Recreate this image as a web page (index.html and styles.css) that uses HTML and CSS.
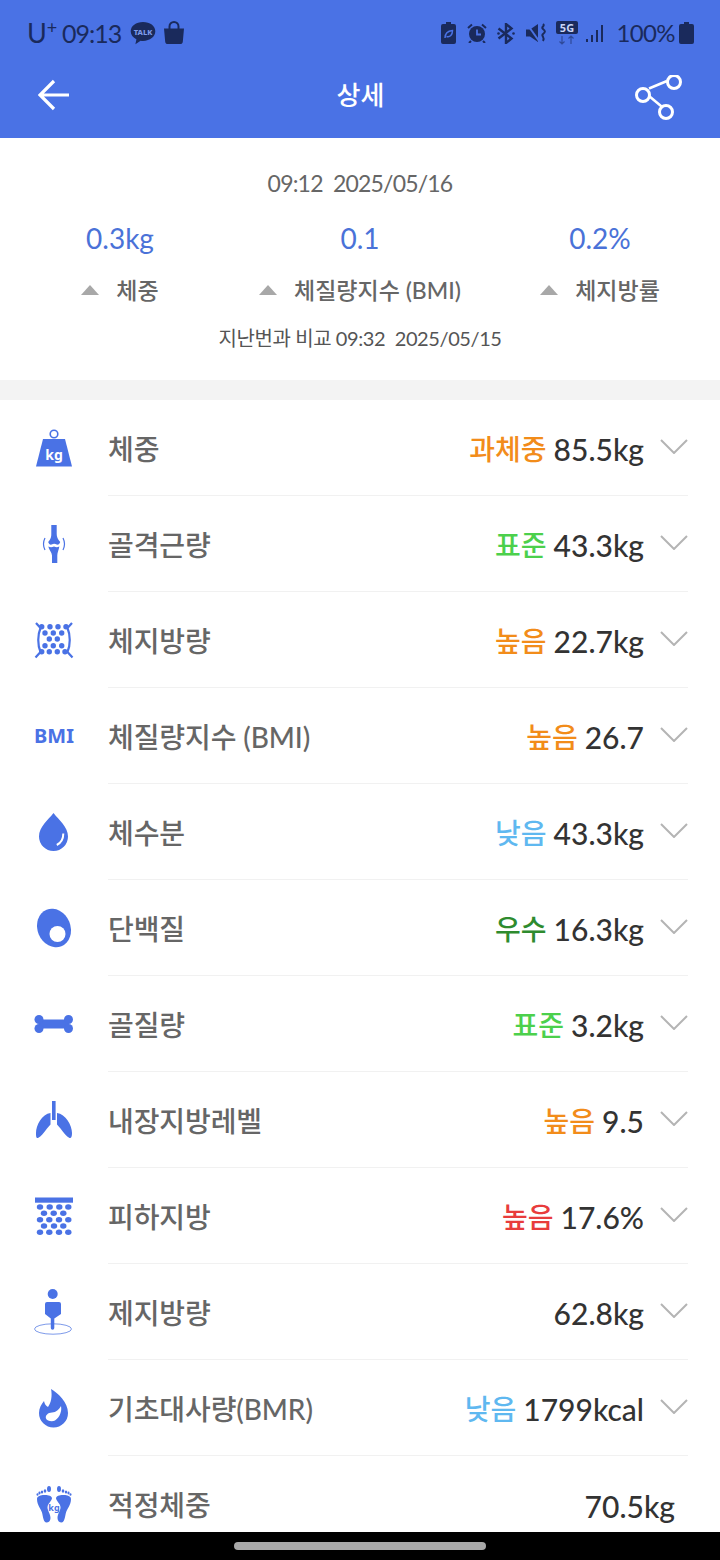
FILE: index.html
```html
<!DOCTYPE html>
<html lang="ko">
<head>
    <meta charset="UTF-8">
    <meta name="viewport" content="width=device-width, initial-scale=1.0">
    <title>상세</title>
    <link rel="stylesheet" href="styles.css">
</head>
<body>
    <div class="screen">
        <header class="top">
            <div class="status-bar">
                <div class="status-left">
                    <span class="carrier">U<sup>+</sup></span>
                    <span class="clock">09:13</span>
                    <svg class="s-talk" viewBox="0 0 26 24"><path d="M13 1C6 1 .7 5 .7 10.300c0 3.400 2.300 6.300 5.700 8l-1 4.900 5.200-3.500c.8.100 1.600.2 2.400.2 7 0 12.300-4.200 12.300-9.600S20 1 13 1z" fill="#1a2a5c"/><text x="13" y="13.500" class="talk-text">TALK</text></svg>
                    <svg class="s-bag" viewBox="0 0 22 24"><path d="M6.500 8V5.500a4.500 4.500 0 0 1 9 0V8" fill="none" stroke="#1a2a5c" stroke-width="2"/><path d="M1 7.500h20l-1.200 13.200c-.1 1.500-1.200 2.300-2.600 2.300H4.800c-1.400 0-2.500-.8-2.600-2.300z" fill="#1a2a5c"/></svg>
                </div>
                <div class="status-right">
                    <svg class="s-i15" viewBox="0 0 15 22"><path d="M5 0h5v2h3a2 2 0 0 1 2 2v16a2 2 0 0 1-2 2H2a2 2 0 0 1-2-2V4a2 2 0 0 1 2-2h3z" fill="#1a2a5c"/><path d="M4 16c0-5 3-7 7.500-7.500C11.500 13 9 15.500 5.500 14.500" fill="none" stroke="#4a72e5" stroke-width="1.500"/></svg>
                    <svg class="s-i20" viewBox="0 0 20 20"><circle cx="10" cy="11" r="8" fill="#1a2a5c"/><path d="M10 6.500V11.500h4" fill="none" stroke="#4a72e5" stroke-width="1.800"/><path d="M1 5l4-3.500M19 5l-4-3.500M4 18l-2 2M16 18l2 2" stroke="#1a2a5c" stroke-width="2"/></svg>
                    <svg class="s-i18" viewBox="0 0 18 21"><path d="M1.500 5.500l13 10-5.500 4.500V1l5.500 4.500-13 10" fill="none" stroke="#1a2a5c" stroke-width="2.400"/><circle cx="1.500" cy="10.500" r="1.300" fill="#1a2a5c"/><circle cx="16.500" cy="10.500" r="1.300" fill="#1a2a5c"/></svg>
                    <svg class="s-i20" viewBox="0 0 20 20"><path d="M0 6.500h4L12 1v18l-8-5.500H0z" fill="#1a2a5c"/><path d="M1 1l12 17" stroke="#4a72e5" stroke-width="2"/><path d="M17 1c2.500 2-2.500 3 0 5s2.500 3 0 5 2.500 3 0 7" fill="none" stroke="#1a2a5c" stroke-width="2"/></svg>
                    <svg class="s-5g" viewBox="0 0 22 24"><rect width="22" height="13" rx="2" fill="#1a2a5c"/><text x="11" y="10.800" class="fiveg-text">5G</text><path d="M6 15v8M3.500 20.500L6 23l2.500-2.500M15 23v-8M12.500 17.500L15 15l2.500 2.500" fill="none" stroke="#1a2a5c" stroke-opacity=".55" stroke-width="1.200"/></svg>
                    <svg class="s-signal" viewBox="0 0 19 18"><path d="M1 15h2v3H1zM6 11h2v7H6zM11 6h2v12h-2zM16 1h2v17h-2z" fill="#1a2a5c"/></svg>
                    <span class="battery-text">100%</span>
                    <svg class="s-i15" viewBox="0 0 15 22"><path d="M5 0h5v2h3a2 2 0 0 1 2 2v16a2 2 0 0 1-2 2H2a2 2 0 0 1-2-2V4a2 2 0 0 1 2-2h3z" fill="#1a2a5c"/></svg>
                </div>
            </div>
            <div class="app-bar">
                <svg class="back" viewBox="0 0 32 32"><path d="M31 16H2M16 2L2 16l14 14" fill="none" stroke="#fff" stroke-width="3.200"/></svg>
                <h1>상세</h1>
                <svg class="share" viewBox="0 0 48 46"><path d="M14 13.500L32 6M14 21l18 15" fill="none" stroke="#fff" stroke-width="2.500"/><circle cx="39" cy="7" r="6.500" fill="#4a72e5" stroke="#fff" stroke-width="3"/><circle cx="8" cy="20" r="6.500" fill="#4a72e5" stroke="#fff" stroke-width="3"/><circle cx="31" cy="37" r="6.500" fill="#4a72e5" stroke="#fff" stroke-width="3"/></svg>
            </div>
        </header>

        <section class="summary">
            <p class="measured">09:12&nbsp; 2025/05/16</p>
            <div class="deltas">
                <div class="delta">
                    <div class="delta-value">0.3kg</div>
                    <div class="delta-label"><i class="up"></i>체중</div>
                </div>
                <div class="delta">
                    <div class="delta-value">0.1</div>
                    <div class="delta-label"><i class="up"></i>체질량지수 (BMI)</div>
                </div>
                <div class="delta">
                    <div class="delta-value">0.2%</div>
                    <div class="delta-label"><i class="up"></i>체지방률</div>
                </div>
            </div>
            <p class="compare">지난번과 비교 09:32&nbsp; 2025/05/15</p>
        </section>

        <main class="list">
            <div class="row">
                <div class="row-icon">
                    <svg viewBox="0 0 40 40"><circle cx="20" cy="6" r="3.800" fill="none" stroke="#4a72e5" stroke-width="1.600"/><path d="M9 11h22l7 27.500H2z" fill="#4a72e5"/><text x="20" y="32" class="icon-kg">kg</text></svg>
                </div>
                <div class="row-body">
                    <span class="row-name">체중</span>
                    <span class="grade orange">과체중</span>
                    <span class="row-value">85.5kg</span>
                    <svg class="chevron" viewBox="0 0 28 15"><path d="M1 1l13 13L27 1" fill="none" stroke="#b4b4b4" stroke-width="2"/></svg>
                </div>
            </div>
            <div class="row">
                <div class="row-icon">
                    <svg viewBox="0 0 40 40"><path d="M17.300 1h5.400v9c0 3 1 5 3.500 8-.5 2-2 3-3.500 2.500-1.500-1-3.500-1-5 0-1.500.5-3-.5-3.500-2.500 2.500-3 3.200-5 3.100-8zM14.300 22.500c2 1 3.500 1 5.700 0 2.200 1 3.500 1 5.300 0-.3 3-2 6-2 9V39H18v-7.500c0-3-3.300-6-3.700-9z" fill="#4a72e5"/><path d="M11 14c-2 4-2 8 0 12M29 14c2 4 2 8 0 12" fill="none" stroke="#4a72e5" stroke-width="1.200"/></svg>
                </div>
                <div class="row-body">
                    <span class="row-name">골격근량</span>
                    <span class="grade green">표준</span>
                    <span class="row-value">43.3kg</span>
                    <svg class="chevron" viewBox="0 0 28 15"><path d="M1 1l13 13L27 1" fill="none" stroke="#b4b4b4" stroke-width="2"/></svg>
                </div>
            </div>
            <div class="row">
                <div class="row-icon">
                    <svg viewBox="0 0 40 40" fill="#4a72e5">
                        <path d="M2 3l4.500 5C3.500 15 3.500 25 6.500 32L1.500 37.500M38 3l-4.500 5c3 7 3 17 0 24l5 5.500" fill="none" stroke="#4a72e5" stroke-width="2.200"/>
                        <circle cx="7.700" cy="6.700" r="2.700"/><circle cx="16" cy="6.700" r="2.700"/><circle cx="24" cy="6.700" r="2.700"/><circle cx="32" cy="6.700" r="2.700"/>
                        <circle cx="11" cy="13" r="2.700"/><circle cx="19.300" cy="13" r="2.700"/><circle cx="27.700" cy="13" r="2.700"/>
                        <circle cx="15.300" cy="19" r="2.700"/><circle cx="23.300" cy="19" r="2.700"/>
                        <circle cx="11" cy="25.700" r="2.700"/><circle cx="19.300" cy="25.700" r="2.700"/><circle cx="27.700" cy="25.700" r="2.700"/>
                        <circle cx="7.700" cy="31.700" r="2.700"/><circle cx="15.300" cy="31.700" r="2.700"/><circle cx="23.300" cy="31.700" r="2.700"/><circle cx="31" cy="31.700" r="2.700"/>
                    </svg>
                </div>
                <div class="row-body">
                    <span class="row-name">체지방량</span>
                    <span class="grade orange">높음</span>
                    <span class="row-value">22.7kg</span>
                    <svg class="chevron" viewBox="0 0 28 15"><path d="M1 1l13 13L27 1" fill="none" stroke="#b4b4b4" stroke-width="2"/></svg>
                </div>
            </div>
            <div class="row">
                <div class="row-icon"><span class="bmi-mark">BMI</span></div>
                <div class="row-body">
                    <span class="row-name">체질량지수 (BMI)</span>
                    <span class="grade orange">높음</span>
                    <span class="row-value">26.7</span>
                    <svg class="chevron" viewBox="0 0 28 15"><path d="M1 1l13 13L27 1" fill="none" stroke="#b4b4b4" stroke-width="2"/></svg>
                </div>
            </div>
            <div class="row">
                <div class="row-icon">
                    <svg viewBox="0 0 40 40"><path d="M19.500 1C14 8 5 15 5 24.500a14.500 14.500 0 0 0 29 0C34 15 25 8 19.500 1z" fill="#4a72e5"/><path d="M29.300 21.500c0 5-2.500 9.500-6.500 11.500" fill="none" stroke="#fff" stroke-width="2"/></svg>
                </div>
                <div class="row-body">
                    <span class="row-name">체수분</span>
                    <span class="grade sky">낮음</span>
                    <span class="row-value">43.3kg</span>
                    <svg class="chevron" viewBox="0 0 28 15"><path d="M1 1l13 13L27 1" fill="none" stroke="#b4b4b4" stroke-width="2"/></svg>
                </div>
            </div>
            <div class="row">
                <div class="row-icon">
                    <svg viewBox="0 0 40 40"><ellipse cx="20" cy="20" rx="16.500" ry="19.800" transform="rotate(-22 20 20)" fill="#4a72e5"/><circle cx="23.500" cy="26" r="8" fill="#fff"/></svg>
                </div>
                <div class="row-body">
                    <span class="row-name">단백질</span>
                    <span class="grade dark-green">우수</span>
                    <span class="row-value">16.3kg</span>
                    <svg class="chevron" viewBox="0 0 28 15"><path d="M1 1l13 13L27 1" fill="none" stroke="#b4b4b4" stroke-width="2"/></svg>
                </div>
            </div>
            <div class="row">
                <div class="row-icon">
                    <svg viewBox="0 0 40 40" fill="#4a72e5"><rect x="5" y="15.500" width="30" height="9"/><circle cx="5" cy="15.500" r="4.500"/><circle cx="5" cy="24.500" r="4.500"/><circle cx="34.500" cy="15.500" r="4.500"/><circle cx="34.500" cy="24.500" r="4.500"/></svg>
                </div>
                <div class="row-body">
                    <span class="row-name">골질량</span>
                    <span class="grade green">표준</span>
                    <span class="row-value">3.2kg</span>
                    <svg class="chevron" viewBox="0 0 28 15"><path d="M1 1l13 13L27 1" fill="none" stroke="#b4b4b4" stroke-width="2"/></svg>
                </div>
            </div>
            <div class="row">
                <div class="row-icon">
                    <svg viewBox="0 0 40 40" fill="#4a72e5"><rect x="18" y="1" width="3.600" height="19"/><path d="M16.500 13v11.500l-3.500 4c-3 4-6 8-9 9.500-2 .5-2-2-2-5 0-8 6-19 14.500-20zM23 13v11.500l3.500 4c3 4 6 8 9 9.500 2 .5 2.500-2 2.500-5 0-8-6.500-19-15-20z"/></svg>
                </div>
                <div class="row-body">
                    <span class="row-name">내장지방레벨</span>
                    <span class="grade orange">높음</span>
                    <span class="row-value">9.5</span>
                    <svg class="chevron" viewBox="0 0 28 15"><path d="M1 1l13 13L27 1" fill="none" stroke="#b4b4b4" stroke-width="2"/></svg>
                </div>
            </div>
            <div class="row">
                <div class="row-icon">
                    <svg viewBox="0 0 40 40" fill="#4a72e5">
                        <rect x="1" y="1.500" width="38" height="5.200"/>
                        <ellipse cx="6" cy="11" rx="3.200" ry="2.700"/><ellipse cx="15.700" cy="11" rx="3.200" ry="2.700"/><ellipse cx="25.300" cy="11" rx="3.200" ry="2.700"/><ellipse cx="34.300" cy="11" rx="3.200" ry="2.700"/>
                        <ellipse cx="10" cy="17.300" rx="3.200" ry="2.700"/><ellipse cx="19.700" cy="17.300" rx="3.200" ry="2.700"/><ellipse cx="29.300" cy="17.300" rx="3.200" ry="2.700"/>
                        <ellipse cx="6" cy="23.700" rx="3.200" ry="2.700"/><ellipse cx="15.300" cy="23.700" rx="3.200" ry="2.700"/><ellipse cx="25" cy="23.700" rx="3.200" ry="2.700"/><ellipse cx="34.300" cy="23.700" rx="3.200" ry="2.700"/>
                        <ellipse cx="10" cy="30" rx="3.200" ry="2.700"/><ellipse cx="20" cy="30" rx="3.200" ry="2.700"/><ellipse cx="29.300" cy="30" rx="3.200" ry="2.700"/>
                        <ellipse cx="6" cy="36.300" rx="3.200" ry="2.700"/><ellipse cx="15.300" cy="36.300" rx="3.200" ry="2.700"/><ellipse cx="25" cy="36.300" rx="3.200" ry="2.700"/><ellipse cx="34.300" cy="36.300" rx="3.200" ry="2.700"/>
                    </svg>
                </div>
                <div class="row-body">
                    <span class="row-name">피하지방</span>
                    <span class="grade red">높음</span>
                    <span class="row-value">17.6%</span>
                    <svg class="chevron" viewBox="0 0 28 15"><path d="M1 1l13 13L27 1" fill="none" stroke="#b4b4b4" stroke-width="2"/></svg>
                </div>
            </div>
            <div class="row">
                <div class="row-icon">
                    <svg class="tall" viewBox="0 0 40 46"><ellipse cx="19" cy="40" rx="18.500" ry="5.200" fill="none" stroke="#7d9aea" stroke-width="1"/><circle cx="18.700" cy="5" r="5" fill="#4a72e5"/><path d="M13 13h12a2 2 0 0 1 2 2v10l-6.700 4.500V39a1.500 1.500 0 0 1-3.500 0v-9.500L11 25V15a2 2 0 0 1 2-2z" fill="#4a72e5"/></svg>
                </div>
                <div class="row-body">
                    <span class="row-name">제지방량</span>
                    <span class="row-value">62.8kg</span>
                    <svg class="chevron" viewBox="0 0 28 15"><path d="M1 1l13 13L27 1" fill="none" stroke="#b4b4b4" stroke-width="2"/></svg>
                </div>
            </div>
            <div class="row">
                <div class="row-icon">
                    <svg viewBox="0 0 40 40"><path d="M17 1c7 4 17 13 17 24a14.500 14.500 0 0 1-29 0c0-5 2.500-9 5-12 .5 3 2 5 4 6 3-4 4.500-11 3-18z" fill="#4a72e5"/><path d="M27 18c1 5-1 11-6 14.500-3 1.500-8 .5-9-2-1-3 2-6 6-6 4 0 7-3 9-6.500z" fill="#fff"/></svg>
                </div>
                <div class="row-body">
                    <span class="row-name">기초대사량(BMR)</span>
                    <span class="grade sky">낮음</span>
                    <span class="row-value">1799kcal</span>
                    <svg class="chevron" viewBox="0 0 28 15"><path d="M1 1l13 13L27 1" fill="none" stroke="#b4b4b4" stroke-width="2"/></svg>
                </div>
            </div>
            <div class="row row-last">
                <div class="row-icon">
                    <svg viewBox="0 0 40 40" fill="#4a72e5">
                        <path d="M3 15c0-3 4-4 7-4s7 0 8 3c0 3-4 5-4.500 9-.3 3 3 7 3 11 0 3-2 4.500-4 4.500-3 0-3.500-6-4.500-10C7 25 3 21 3 15zM37 15c0-3-4-4-7-4s-7 0-8 3c0 3 4 5 4.500 9 .3 3-3 7-3 11 0 3 2 4.500 4 4.500 3 0 3.500-6 4.500-10C33 25 37 21 37 15z"/>
                        <ellipse cx="15" cy="5" rx="2" ry="3"/><ellipse cx="11" cy="7" rx="1.300" ry="1.800"/><ellipse cx="8" cy="8" rx="1.200" ry="1.600"/><ellipse cx="5.500" cy="9" rx="1.100" ry="1.400"/><ellipse cx="3.500" cy="10.500" rx="1" ry="1.200"/>
                        <ellipse cx="25" cy="5" rx="2" ry="3"/><ellipse cx="29" cy="7" rx="1.300" ry="1.800"/><ellipse cx="32" cy="8" rx="1.200" ry="1.600"/><ellipse cx="34.500" cy="9" rx="1.100" ry="1.400"/><ellipse cx="36.500" cy="10.500" rx="1" ry="1.200"/>
                        <text x="20" y="27" class="icon-kg-small">kg</text>
                    </svg>
                </div>
                <div class="row-body">
                    <span class="row-name">적정체중</span>
                    <span class="row-value">70.5kg</span>
                </div>
            </div>
        </main>

        <footer class="nav-bar"><span class="nav-pill"></span></footer>
    </div>
</body>
</html>
```
FILE: styles.css
```css
/* 전체 */
* {
    margin: 0;
    padding: 0;
    box-sizing: border-box;
}

body {
    background-color: #fff;
    font-family: "Lato", "Noto Sans CJK KR", sans-serif;
    color: #333;
}

.screen {
    width: 720px;
    height: 1560px;
    display: flex;
    flex-direction: column;
    overflow: hidden;
}

/* 상단 */
.top {
    height: 138px;
    background-color: #4a72e5;
    flex-shrink: 0;
}

.status-bar {
    height: 66px;
    padding: 0 26px 0 27px;
    display: flex;
    justify-content: space-between;
    align-items: center;
    color: #1a2a5c;
}

.status-left,
.status-right {
    display: flex;
    align-items: center;
}

.carrier {
    font-size: 27px;
    line-height: 30px;
    width: 35px;
}

.carrier sup {
    font-size: 18px;
    line-height: 0;
    vertical-align: 9px;
}

.clock {
    font-size: 25px;
    line-height: 30px;
    letter-spacing: -1px;
    margin-right: 9px;
}

.s-talk {
    width: 26px;
    height: 24px;
    margin-right: 7px;
}

.talk-text {
    font: 800 7.500px "Noto Sans", sans-serif;
    fill: #7f9bea;
    text-anchor: middle;
}

.fiveg-text {
    font: 700 11px "Noto Sans", sans-serif;
    fill: #c9d5f7;
    text-anchor: middle;
}

.s-bag {
    width: 22px;
    height: 24px;
}

.s-i15 {
    width: 15px;
    height: 22px;
}

.s-i20 {
    width: 20px;
    height: 20px;
    margin-left: 11px;
}

.s-i18 {
    width: 18px;
    height: 21px;
    margin-left: 10px;
}

.s-5g {
    width: 22px;
    height: 24px;
    margin-left: 10px;
}

.s-signal {
    width: 19px;
    height: 18px;
    margin-left: 7px;
}

.battery-text {
    font-size: 24px;
    line-height: 30px;
    letter-spacing: -0.6px;
    margin: 0 4px 0 12px;
}

.app-bar {
    height: 72px;
    padding: 0 38px;
    display: flex;
    justify-content: space-between;
    align-items: center;
}

.app-bar h1 {
    font-size: 26px;
    font-weight: 500;
    color: #fff;
    margin: 0 0 18px 16px;
}

.back {
    width: 32px;
    height: 32px;
    margin-bottom: 14px;
}

.share {
    width: 48px;
    height: 46px;
    margin: 0 -1px 8px 0;
}

/* 요약 */
.summary {
    height: 262px;
    padding-top: 30px;
    border-bottom: 20px solid #f3f3f3;
    text-align: center;
    flex-shrink: 0;
}

.measured {
    font-size: 23px;
    line-height: 30px;
    letter-spacing: -0.8px;
    color: #666;
}

.deltas {
    display: grid;
    grid-template-columns: repeat(3, 1fr);
    margin-top: 20px;
}

.delta-value {
    font-size: 28px;
    line-height: 40px;
    color: #4a72d8;
}

.delta-label {
    margin-top: 15px;
    font-size: 23px;
    line-height: 34px;
    font-weight: 500;
    color: #666;
}

.up {
    display: inline-block;
    width: 0;
    height: 0;
    border-left: 9px solid transparent;
    border-right: 9px solid transparent;
    border-bottom: 10px solid #a8a8a8;
    margin-right: 17px;
    vertical-align: 4px;
}

.compare {
    margin-top: 16px;
    font-size: 20px;
    line-height: 30px;
    letter-spacing: -0.4px;
    color: #555;
}

/* 목록 */
.list {
    flex: 1;
    overflow: hidden;
}

.row {
    height: 96px;
    display: flex;
}

.row-icon {
    width: 108px;
    display: flex;
    align-items: center;
    justify-content: center;
    flex-shrink: 0;
    padding-bottom: 1px;
}

.row-icon svg {
    width: 40px;
    height: 40px;
}

.row-icon svg.tall {
    height: 46px;
}

.icon-kg {
    font: 700 14px "Noto Sans", sans-serif;
    fill: #fff;
    text-anchor: middle;
}

.icon-kg-small {
    font: 700 9px "Noto Sans", sans-serif;
    fill: #4a72e5;
    text-anchor: middle;
}

.bmi-mark {
    font: 700 20px "Noto Sans", sans-serif;
    color: #4a72e5;
}

.row-body {
    flex: 1;
    margin-right: 32px;
    border-bottom: 1px solid #f1f1f1;
    display: flex;
    align-items: center;
}

.row-name {
    flex: 1;
    font-size: 28px;
    font-weight: 500;
    color: #666;
    letter-spacing: -0.1px;
}

.grade {
    font-size: 28px;
    font-weight: 500;
    margin: 1px 7px 0 0;
}

.orange { color: #f28c1a; }
.green { color: #4cd04c; }
.sky { color: #5fb8f0; }
.dark-green { color: #2e8b2e; }
.red { color: #e83c3c; }

.row-value {
    font-size: 30px;
    font-weight: 500;
    color: #333;
    margin-top: 3px;
}

.chevron {
    width: 28px;
    height: 15px;
    margin: 0 0 3px 16px;
}

.row-last .row-body {
    border-bottom: none;
    padding-right: 13px;
}

/* 하단 바 */
.nav-bar {
    height: 28px;
    background-color: #000;
    display: flex;
    justify-content: center;
    align-items: center;
    flex-shrink: 0;
}

.nav-pill {
    width: 252px;
    height: 8px;
    border-radius: 4px;
    background-color: #a8a8a8;
}
```
